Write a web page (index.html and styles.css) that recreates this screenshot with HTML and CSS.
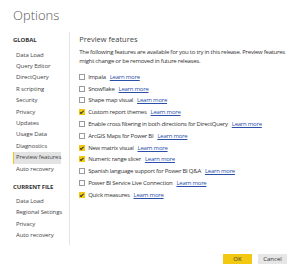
FILE: index.html
```html
<!DOCTYPE html>
<html lang="en">
<head>
    <meta charset="UTF-8">
    <title>Options</title>
    <link rel="stylesheet" href="styles.css">
</head>
<body>
  <div class="dialog">
    <div class="title">Options</div>

    <div class="main">
      <div class="sidebar">
        <div class="group">GLOBAL</div>
        <div class="item">Data Load</div>
        <div class="item">Query Editor</div>
        <div class="item">DirectQuery</div>
        <div class="item">R scripting</div>
        <div class="item">Security</div>
        <div class="item">Privacy</div>
        <div class="item">Updates</div>
        <div class="item">Usage Data</div>
        <div class="item">Diagnostics</div>
        <div class="item active">Preview features</div>
        <div class="item">Auto recovery</div>

        <div class="group second">CURRENT FILE</div>
        <div class="item">Data Load</div>
        <div class="item">Regional Settings</div>
        <div class="item">Privacy</div>
        <div class="item">Auto recovery</div>
      </div>

      <div class="content">
        <div class="heading">Preview features</div>
        <p class="desc">The following features are available for you to try in this release. Preview features might change or be removed in future releases.</p>

        <div class="opt"><span class="box"></span>Impala <a href="#">Learn more</a></div>
        <div class="opt"><span class="box"></span>Snowflake <a href="#">Learn more</a></div>
        <div class="opt"><span class="box"></span>Shape map visual <a href="#">Learn more</a></div>
        <div class="opt"><span class="box on"></span>Custom report themes <a href="#">Learn more</a></div>
        <div class="opt"><span class="box"></span>Enable cross filtering in both directions for DirectQuery <a href="#">Learn more</a></div>
        <div class="opt"><span class="box"></span>ArcGIS Maps for Power BI <a href="#">Learn more</a></div>
        <div class="opt"><span class="box on"></span>New matrix visual <a href="#">Learn more</a></div>
        <div class="opt"><span class="box on"></span>Numeric range slicer <a href="#">Learn more</a></div>
        <div class="opt"><span class="box"></span>Spanish language support for Power BI Q&amp;A <a href="#">Learn more</a></div>
        <div class="opt"><span class="box"></span>Power BI Service Live Connection <a href="#">Learn more</a></div>
        <div class="opt"><span class="box on"></span>Quick measures <a href="#">Learn more</a></div>
      </div>
    </div>

    <div class="buttons">
      <button class="btn ok">OK</button>
      <button class="btn cancel">Cancel</button>
    </div>
  </div>
</body>
</html>
```

FILE: styles.css
```css
html, body {
    margin: 0;
    background-color: #fff;
    font-family: "Open Sans", "Noto Sans", Arial, sans-serif;
    color: #333;
}

.dialog {
    width: 300px;
    height: 278px;
    box-sizing: border-box;
    padding: 6px 13px 0 13px;
}

.title {
    font-size: 13px;
    font-weight: 300;
    color: #555;
    line-height: 18px;
    height: 26px;
}

.main {
    display: flex;
    height: 213px;
}

.sidebar {
    flex: 0 0 52px;
    border-right: 1px solid #e4e4e4;
    font-size: 6px;
    color: #444;
    white-space: nowrap;
    letter-spacing: -0.1px;
}

.group {
    font-weight: bold;
    line-height: 11px;
    margin-top: 3px;
    margin-bottom: 3.5px;
    color: #333;
}

.group.second {
    margin-top: 7px;
    margin-bottom: 3px;
}

.item {
    line-height: 11.4px;
    padding-left: 3px;
}

.item.active {
    background-color: #e3e3e3;
    border-left: 1px solid #f2c811;
    padding-left: 2px;
    margin-right: 8px;
}

.content {
    flex: 1;
    min-width: 0;
    padding-left: 9px;
    font-size: 6px;
    color: #333;
    letter-spacing: -0.25px;
}

.heading {
    font-size: 7.5px;
    color: #444;
    line-height: 11px;
    margin-top: 2px;
    letter-spacing: 0;
}

.desc {
    margin: 3px 0 5px 0;
    line-height: 9px;
}

.opt {
    display: flex;
    align-items: center;
    height: 11.8px;
    white-space: nowrap;
}

.opt a {
    color: #2a4fa8;
    margin-left: 4px;
}

.box {
    width: 4px;
    height: 4px;
    border: 1px solid #9a9a9a;
    background: #fff;
    margin-right: 3px;
    position: relative;
}

.box.on {
    background: #f2c811;
    border-color: #f2c811;
}

.box.on::after {
    content: "";
    position: absolute;
    left: 1px;
    top: 0;
    width: 1px;
    height: 2.5px;
    border: solid #333;
    border-width: 0 1px 1px 0;
    transform: rotate(45deg);
}

.buttons {
    display: flex;
    justify-content: flex-end;
    gap: 6px;
    margin-top: 9px;
}

.btn {
    font-family: "Open Sans", "Noto Sans", Arial, sans-serif;
    font-size: 6px;
    width: 29px;
    height: 10px;
    padding: 0;
    border: 0;
    color: #333;
}

.btn.ok {
    background: #f2c811;
}

.btn.cancel {
    background: #e6e6e6;
}
```
